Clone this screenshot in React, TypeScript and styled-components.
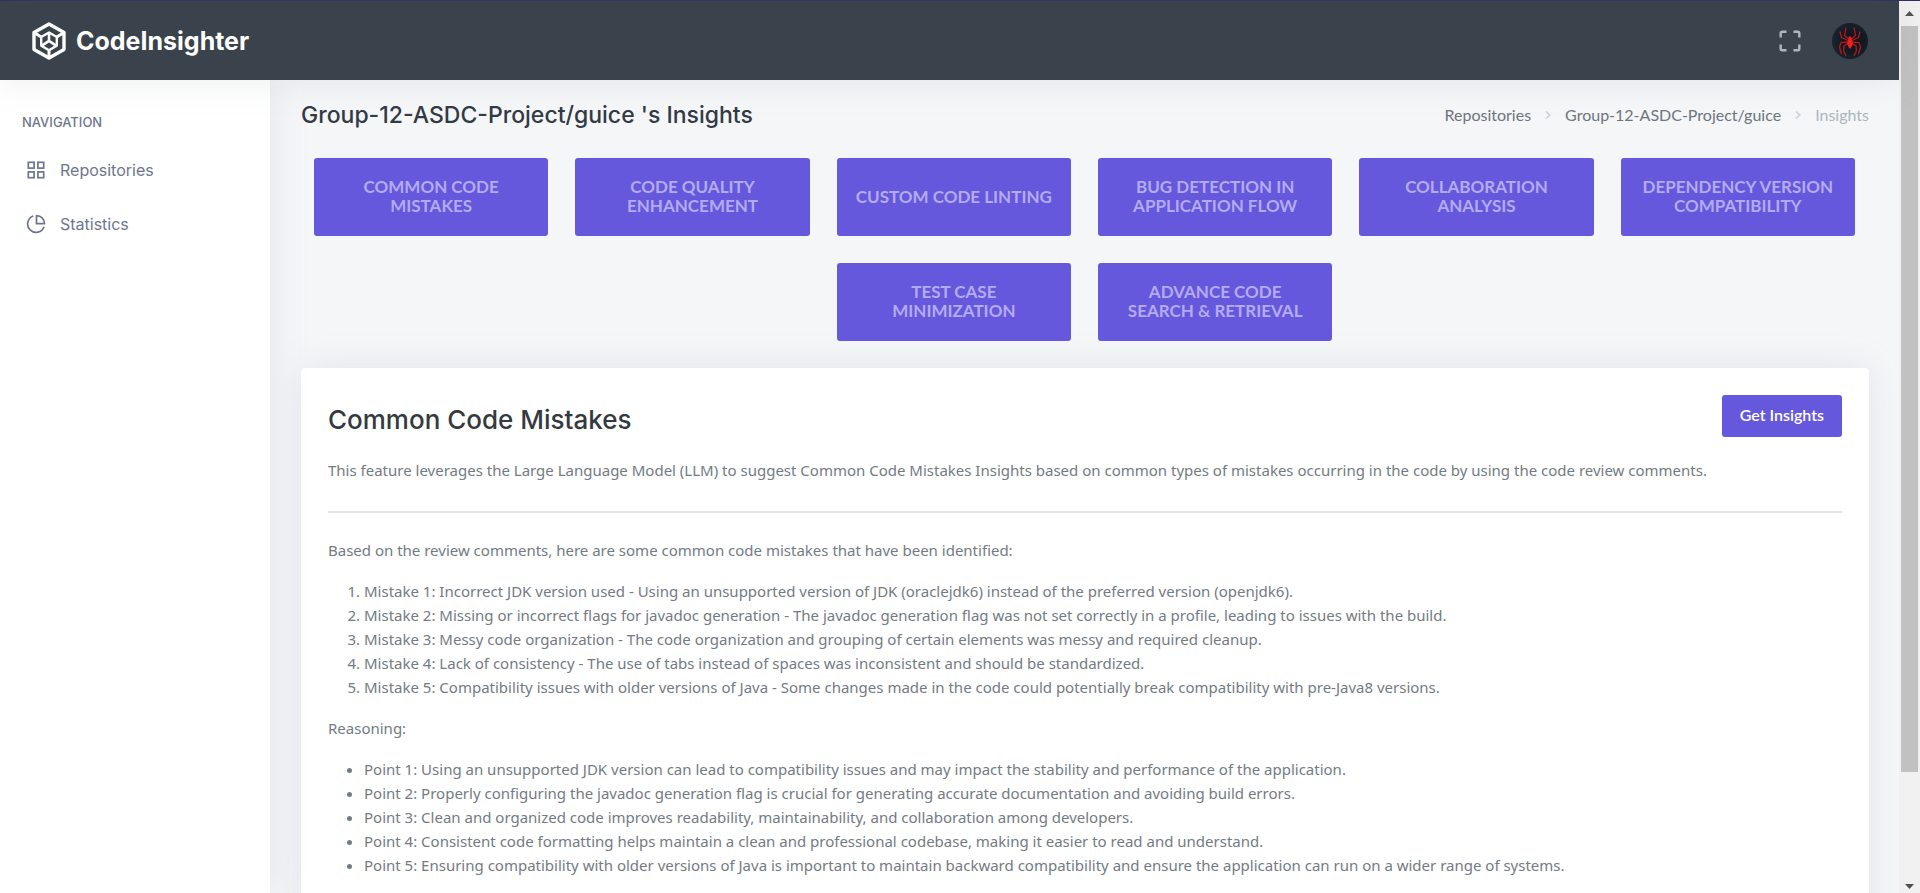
import React from 'react';
import styled, { createGlobalStyle } from 'styled-components';

const prose = '"Noto Sans", "Open Sans", sans-serif';
const control = 'Lato, "Open Sans", sans-serif';
const display = 'Inter, Roboto, sans-serif';
const primary = '#6658dd';
const softShadow = '0 0 35px rgba(154, 161, 171, 0.2)';

const GlobalStyle = createGlobalStyle`
  *, *::before, *::after { box-sizing: border-box; }
  body {
    margin: 0;
    background: #f5f6f8;
    color: #737b83;
    font: 400 15px/24px ${prose};
  }
  h1, h2, p, ul, ol { margin: 0; padding: 0; }
  a { color: inherit; text-decoration: none; }
`;

const Window = styled.div`
  display: flex;
  height: 100vh;
  border-top: 1px solid #2f2a5c;
`;

const Page = styled.div`
  flex: 1;
  min-width: 0;
  display: flex;
  flex-direction: column;
`;

const Header = styled.header`
  position: relative;
  z-index: 2;
  flex: none;
  display: flex;
  align-items: center;
  justify-content: space-between;
  height: 79px;
  padding: 0 31px;
  background: #3a424b;
  box-shadow: ${softShadow};
`;

const Brand = styled.a`
  display: flex;
  align-items: center;
  gap: 9px;
  color: #fff;
  font: 700 25px/32px ${display};
`;

const HeaderTools = styled.div`
  display: flex;
  align-items: center;
  gap: 31px;
`;

const IconButton = styled.button`
  display: flex;
  padding: 0;
  border: 0;
  border-radius: 50%;
  background: none;
  color: #adb5bd;
  cursor: pointer;
`;

const Body = styled.div`
  flex: 1;
  min-height: 0;
  display: flex;
`;

const Sidebar = styled.nav`
  position: relative;
  z-index: 1;
  flex: none;
  width: 270px;
  padding: 30px 22px;
  background: #fff;
  box-shadow: ${softShadow};
  color: #6e768e;
`;

const NavHeading = styled.h2`
  font: 500 13px/24px ${display};
  margin-bottom: 9px;
`;

const NavList = styled.ul`
  list-style: none;
`;

const NavLink = styled.a`
  display: flex;
  align-items: center;
  gap: 14px;
  height: 54px;
  padding-left: 4px;
  font: 400 16px/24px ${display};
`;

const Content = styled.main`
  flex: 1;
  min-width: 0;
  overflow: hidden;
  padding: 0 30px 0 31px;
`;

const TitleBar = styled.div`
  display: flex;
  align-items: center;
  justify-content: space-between;
  height: 70px;
`;

const PageTitle = styled.h1`
  color: #323a46;
  font: 500 23px/32px ${display};
`;

const Crumbs = styled.ol`
  display: flex;
  align-items: center;
  list-style: none;
  font: 400 16px/24px ${control};
`;

const Crumb = styled.li<{ $current?: boolean }>`
  display: flex;
  align-items: center;
  color: ${(p) => (p.$current ? '#adb5bd' : '#6c757d')};
`;

const CrumbDivider = styled.svg`
  margin: 0 12px;
  color: #ccd1d6;
`;

const TileGrid = styled.div`
  display: flex;
  flex-wrap: wrap;
  justify-content: center;
  row-gap: 27px;
  padding: 8px 0 27px;
`;

const TileCell = styled.div`
  flex: 0 0 calc(100% / 6);
  display: flex;
  padding: 0 14px 0 13px;
`;

const Tile = styled.button`
  flex: 1;
  height: 78px;
  padding: 0 16px 2px;
  border: 0;
  border-radius: 3px;
  background: ${primary};
  color: #b3abf0;
  font: 700 17px/19px ${control};
  text-transform: uppercase;
  cursor: pointer;
`;

const Card = styled.section`
  min-height: 620px;
  padding: 27px;
  border-radius: 4px;
  background: #fff;
  box-shadow: ${softShadow};
`;

const CardHeader = styled.div`
  display: flex;
  align-items: flex-start;
  justify-content: space-between;
`;

const CardTitle = styled.h2`
  padding-top: 8px;
  color: #343a40;
  font: 500 26px/34px ${display};
`;

const PrimaryButton = styled.button`
  height: 42px;
  padding: 0 18px 2px;
  border: 0;
  border-radius: 3px;
  background: ${primary};
  color: #fff;
  font: 600 16px/24px ${control};
  cursor: pointer;
`;

const Lead = styled.p`
  padding-top: 21px;
`;

const Rule = styled.hr`
  height: 2px;
  margin: 29px 0 25px;
  border: 0;
  background: #e3e5e7;
`;

const Prose = styled.div`
  display: grid;
  row-gap: 17px;

  ul, ol { padding-left: 36px; }
`;

const ScrollTrack = styled.div`
  flex: none;
  display: flex;
  flex-direction: column;
  align-items: center;
  width: 21px;
  background: #f1f1f1;
`;

const ScrollArrow = styled.div<{ $down?: boolean }>`
  display: flex;
  align-items: center;
  justify-content: center;
  height: 25px;
  margin-top: ${(p) => (p.$down ? 'auto' : '0')};
  padding-top: ${(p) => (p.$down ? '11px' : '0')};
`;

const ScrollThumb = styled.div`
  width: 17px;
  height: calc(84% - 3px);
  background: #c1c1c1;
`;

const LogoMark = () => (
  <svg width="36" height="40" viewBox="0 0 36 40" fill="none" stroke="currentColor" strokeWidth="3.4" strokeLinejoin="round" aria-hidden="true">
    <path d="M18 3 33 11.5v17L18 37 3 28.500v-17z" />
    <path d="M18 11.500 25.800 16v8.600L18 29.300 10.200 24.600V16z" strokeWidth="2.400" />
    <path d="M18 11.500v8.300M18 19.800l-7.500 5M18 19.800l7.500 5" strokeWidth="2.600" />
    <path d="M3 11.500l7.200 4.500M33 11.500L25.800 16M18 37v-7.700" strokeWidth="3" />
  </svg>
);

const FullscreenIcon = () => (
  <svg width="22" height="22" viewBox="0 0 22 22" fill="none" stroke="currentColor" strokeWidth="2.400" strokeLinejoin="round" aria-hidden="true">
    <path d="M1.700 7.500V3.200a1.500 1.500 0 0 1 1.500-1.500H7.500M14.500 1.700h4.300a1.500 1.500 0 0 1 1.500 1.500V7.500M20.300 14.500v4.300a1.500 1.500 0 0 1-1.500 1.500H14.500M7.500 20.300H3.200a1.500 1.500 0 0 1-1.500-1.500V14.500" />
  </svg>
);

const SpiderAvatar = () => (
  <svg width="36" height="36" viewBox="0 0 36 36" aria-hidden="true">
    <defs>
      <radialGradient id="avatar-bg" cx="0.6" cy="0.5" r="0.7">
        <stop offset="0" stopColor="#0b1118" />
        <stop offset="1" stopColor="#1b2733" />
      </radialGradient>
    </defs>
    <circle cx="18" cy="18" r="18" fill="url(#avatar-bg)" />
    <g fill="none" stroke="#b5181b" strokeWidth="1.300" strokeLinejoin="miter">
      <path d="M16.500 16 12.500 12.500 14 4.500" />
      <path d="M19.500 16 23.500 12.500 22 4.500" />
      <path d="M16 17.500 9.500 14.500 8 8.500" />
      <path d="M20 17.500 26.500 14.500 28 8.500" />
      <path d="M16 19 9 19.500 7.500 24 9.500 31" />
      <path d="M20 19 27 19.500 28.500 24 26.500 31" />
      <path d="M16 20.500 12 23 11.500 27.500 14 33" />
      <path d="M20 20.500 24 23 24.500 27.500 22 33" />
    </g>
    <path d="M18 13l1.500 1.500.5 3 1 3-1.500 3.500L18 26l-1.500-2-1.500-3.500 1-3 .5-3z" fill="#ee201c" />
  </svg>
);

const GridIcon = () => (
  <svg width="20" height="20" viewBox="0 0 20 20" fill="none" stroke="currentColor" strokeWidth="1.700" aria-hidden="true">
    <rect x="2.300" y="2.300" width="5.800" height="5.800" />
    <rect x="11.900" y="2.300" width="5.800" height="5.800" />
    <rect x="2.300" y="11.900" width="5.800" height="5.800" />
    <rect x="11.900" y="11.900" width="5.800" height="5.800" />
  </svg>
);

const PieIcon = () => (
  <svg width="20" height="20" viewBox="0 0 20 20" fill="none" stroke="currentColor" strokeWidth="1.700" strokeLinejoin="round" aria-hidden="true">
    <path d="M7.300 2A8.400 8.400 0 1 0 18 12.700" />
    <path d="M10.500 1.600V9.700H18.500C18.500 5.200 15 1.600 10.500 1.600z" />
  </svg>
);

const ChevronIcon = () => (
  <CrumbDivider width="10" height="10" viewBox="0 0 10 10" fill="none" stroke="currentColor" strokeWidth="1.600" aria-hidden="true">
    <path d="M3 1.500 6.800 5 3 8.500" />
  </CrumbDivider>
);

const tiles = [
  'Common Code Mistakes',
  'Code Quality Enhancement',
  'Custom Code Linting',
  'Bug Detection in Application Flow',
  'Collaboration Analysis',
  'Dependency Version Compatibility',
  'Test Case Minimization',
  'Advance Code Search & Retrieval',
];

const mistakes = [
  'Mistake 1: Incorrect JDK version used - Using an unsupported version of JDK (oraclejdk6) instead of the preferred version (openjdk6).',
  'Mistake 2: Missing or incorrect flags for javadoc generation - The javadoc generation flag was not set correctly in a profile, leading to issues with the build.',
  'Mistake 3: Messy code organization - The code organization and grouping of certain elements was messy and required cleanup.',
  'Mistake 4: Lack of consistency - The use of tabs instead of spaces was inconsistent and should be standardized.',
  'Mistake 5: Compatibility issues with older versions of Java - Some changes made in the code could potentially break compatibility with pre-Java8 versions.',
];

const points = [
  'Point 1: Using an unsupported JDK version can lead to compatibility issues and may impact the stability and performance of the application.',
  'Point 2: Properly configuring the javadoc generation flag is crucial for generating accurate documentation and avoiding build errors.',
  'Point 3: Clean and organized code improves readability, maintainability, and collaboration among developers.',
  'Point 4: Consistent code formatting helps maintain a clean and professional codebase, making it easier to read and understand.',
  'Point 5: Ensuring compatibility with older versions of Java is important to maintain backward compatibility and ensure the application can run on a wider range of systems.',
];

export default function App() {
  return (
    <>
      <GlobalStyle />
      <Window>
        <Page>
          <Header>
            <Brand href="#home">
              <LogoMark />
              CodeInsighter
            </Brand>
            <HeaderTools>
              <IconButton type="button" aria-label="Fullscreen">
                <FullscreenIcon />
              </IconButton>
              <IconButton type="button" aria-label="Account">
                <SpiderAvatar />
              </IconButton>
            </HeaderTools>
          </Header>
          <Body>
            <Sidebar>
              <NavHeading>NAVIGATION</NavHeading>
              <NavList>
                <li>
                  <NavLink href="#repositories">
                    <GridIcon />
                    Repositories
                  </NavLink>
                </li>
                <li>
                  <NavLink href="#statistics">
                    <PieIcon />
                    Statistics
                  </NavLink>
                </li>
              </NavList>
            </Sidebar>
            <Content>
              <TitleBar>
                <PageTitle>Group-12-ASDC-Project/guice 's Insights</PageTitle>
                <Crumbs>
                  <Crumb>
                    <a href="#repositories">Repositories</a>
                    <ChevronIcon />
                  </Crumb>
                  <Crumb>
                    <a href="#guice">Group-12-ASDC-Project/guice</a>
                    <ChevronIcon />
                  </Crumb>
                  <Crumb $current aria-current="page">
                    Insights
                  </Crumb>
                </Crumbs>
              </TitleBar>
              <TileGrid>
                {tiles.map((label) => (
                  <TileCell key={label}>
                    <Tile type="button">{label}</Tile>
                  </TileCell>
                ))}
              </TileGrid>
              <Card>
                <CardHeader>
                  <CardTitle>Common Code Mistakes</CardTitle>
                  <PrimaryButton type="button">Get Insights</PrimaryButton>
                </CardHeader>
                <Lead>
                  This feature leverages the Large Language Model (LLM) to suggest Common Code Mistakes Insights based
                  on common types of mistakes occurring in the code by using the code review comments.
                </Lead>
                <Rule />
                <Prose>
                  <p>Based on the review comments, here are some common code mistakes that have been identified:</p>
                  <ol>
                    {mistakes.map((text) => (
                      <li key={text}>{text}</li>
                    ))}
                  </ol>
                  <p>Reasoning:</p>
                  <ul>
                    {points.map((text) => (
                      <li key={text}>{text}</li>
                    ))}
                  </ul>
                </Prose>
              </Card>
            </Content>
          </Body>
        </Page>
        <ScrollTrack aria-hidden="true">
          <ScrollArrow>
            <svg width="9" height="5" viewBox="0 0 9 5" fill="#505050">
              <path d="M0 5 4.500 0 9 5z" />
            </svg>
          </ScrollArrow>
          <ScrollThumb />
          <ScrollArrow $down>
            <svg width="9" height="5" viewBox="0 0 9 5" fill="#505050">
              <path d="M0 0 4.500 5 9 0z" />
            </svg>
          </ScrollArrow>
        </ScrollTrack>
      </Window>
    </>
  );
}
